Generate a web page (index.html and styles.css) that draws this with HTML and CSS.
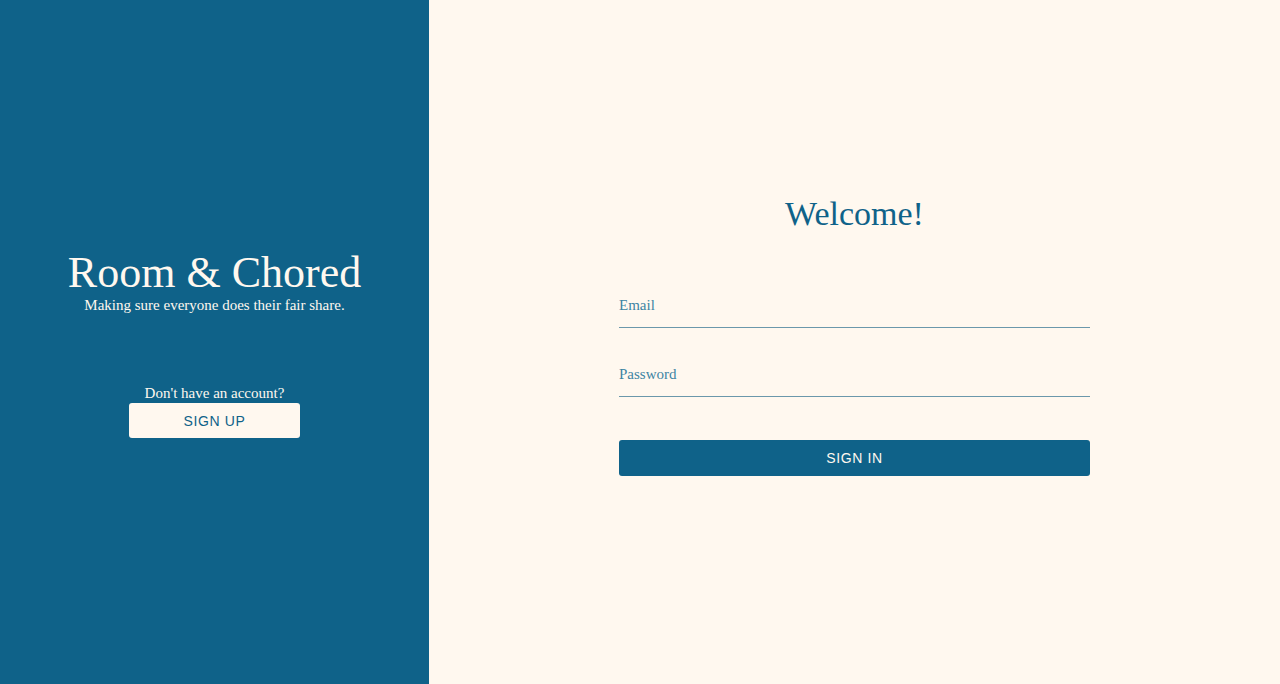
FILE: index.html
```html
<!DOCTYPE html>
<html>
<head>
<meta charset="utf-8">
<link rel="stylesheet" href="styles.css">
</head>
<body>
<div class="page">
  <aside class="brand">
    <div class="brand-inner">
      <h1 class="brand-title">Room &amp; Chored</h1>
      <p class="brand-tagline">Making sure everyone does their fair share.</p>
      <div class="signup">
        <p class="signup-text">Don't have an account?</p>
        <button class="btn btn-light">Sign Up</button>
      </div>
    </div>
  </aside>
  <main class="login">
    <div class="login-inner">
      <h2 class="welcome">Welcome!</h2>
      <form class="form">
        <label class="field"><input class="input" type="email" placeholder="Email"></label>
        <label class="field"><input class="input" type="password" placeholder="Password"></label>
        <button type="button" class="btn btn-dark">Sign In</button>
      </form>
    </div>
  </main>
</div>
</body>
</html>
```
FILE: styles.css
```css
* { box-sizing: border-box; }
html, body { margin: 0; padding: 0; height: 100%; }
body { font-family: "Liberation Serif", "Times New Roman", serif; background: #fff8ef; }
.page { display: flex; height: 684px; }
.brand {
  width: 429px; flex: none; background: #0f6289; color: #fff8ef;
  display: flex; align-items: center; justify-content: center; padding-top: 4px;
}
.brand-inner { display: flex; flex-direction: column; align-items: center; text-align: center; }
.brand-title { margin: 0; font-weight: 400; font-size: 44px; line-height: 46px; }
.brand-tagline { margin: 0; font-size: 15px; line-height: 18px; }
.signup { margin-top: 70px; display: flex; flex-direction: column; align-items: center; }
.signup-text { margin: 0; font-size: 15px; line-height: 18px; }
.btn {
  font-family: "Liberation Sans", Arial, sans-serif; font-size: 14px; letter-spacing: 0.6px;
  text-transform: uppercase; border: none; border-radius: 3px; cursor: pointer;
}
.btn-light { width: 171px; height: 35px; background: #fff8ef; color: #0f6289; margin-top: 1px; }
.btn-dark { width: 471px; height: 36px; background: #0f6289; color: #fff8ef; margin-top: 43px; }
.login { flex: 1; display: flex; align-items: flex-start; justify-content: center; }
.login-inner { margin-top: 190px; display: flex; flex-direction: column; align-items: center; width: 471px; }
.welcome { margin: 0; font-weight: 400; font-size: 34px; line-height: 48px; color: #0f6289; }
.form { margin-top: 58px; width: 471px; display: flex; flex-direction: column; }
.field { display: block; }
.field + .field { margin-top: 37px; }
.input {
  width: 100%; border: none; border-bottom: 1px solid #6b98ab; background: transparent;
  font-family: "Liberation Serif", "Times New Roman", serif; font-size: 15px; padding: 0 0 12px 0;
  height: 32px; outline: none; color: #0f6289;
}
.input::placeholder { color: #3d84a3; opacity: 1; }
```
